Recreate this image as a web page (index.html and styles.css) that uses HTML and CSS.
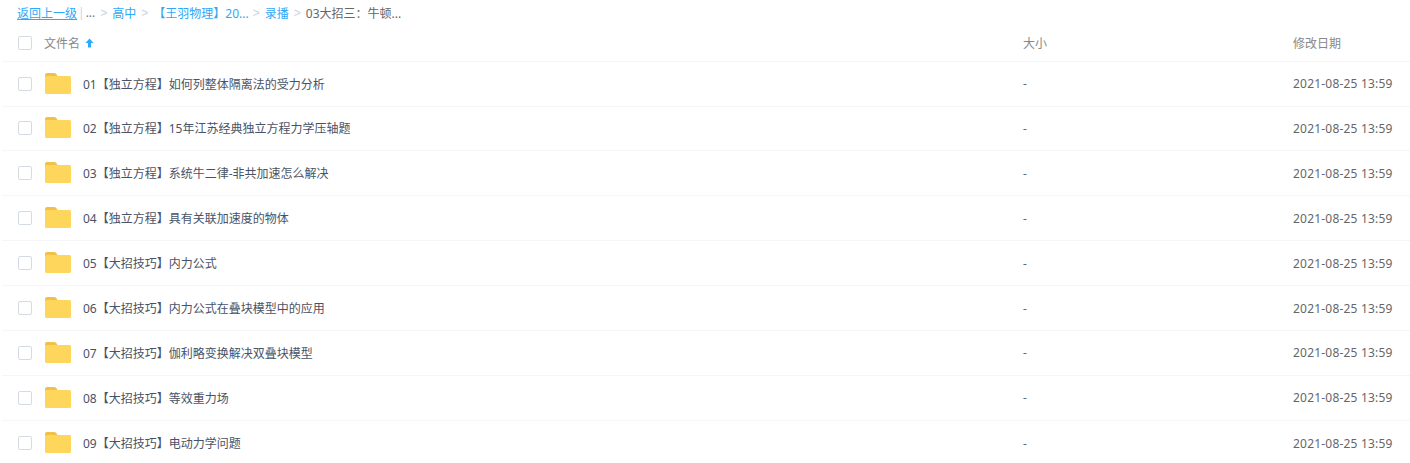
FILE: index.html

```html
<!DOCTYPE html>
<html lang="en">
<head>
    <meta charset="UTF-8">
    <title>文件列表</title>
    <link rel="stylesheet" href="styles.css">
</head>
<body>
    <div class="crumbs">
        <a class="back" href="#">返回上一级</a>
        <span class="bar">|</span>
        <span class="dots">...</span>
        <span class="sep">&gt;</span>
        <a href="#">高中</a>
        <span class="sep">&gt;</span>
        <a class="bracket" href="#">【王羽物理】20...</a>
        <span class="sep">&gt;</span>
        <a href="#">录播</a>
        <span class="sep">&gt;</span>
        <span class="current">03大招三：牛顿...</span>
    </div>

    <div class="row head">
        <span class="check"></span>
        <div class="name-cell head-name">文件名
            <svg class="sort" width="9" height="10" viewBox="0 0 9 10"><path d="M4.5 0.5 L8.5 5 H6 V9.5 H3 V5 H0.5 Z" fill="#2ea8f7"/></svg>
        </div>
        <div class="size">大小</div>
        <div class="date">修改日期</div>
    </div>

    <div class="row">
        <span class="check"></span>
        <div class="name-cell"><svg class="folder"><use href="#folder"/></svg><span class="fname">01【独立方程】如何列整体隔离法的受力分析</span></div>
        <div class="size">-</div>
        <div class="date">2021-08-25 13:59</div>
    </div>
    <div class="row">
        <span class="check"></span>
        <div class="name-cell"><svg class="folder"><use href="#folder"/></svg><span class="fname">02【独立方程】15年江苏经典独立方程力学压轴题</span></div>
        <div class="size">-</div>
        <div class="date">2021-08-25 13:59</div>
    </div>
    <div class="row">
        <span class="check"></span>
        <div class="name-cell"><svg class="folder"><use href="#folder"/></svg><span class="fname">03【独立方程】系统牛二律-非共加速怎么解决</span></div>
        <div class="size">-</div>
        <div class="date">2021-08-25 13:59</div>
    </div>
    <div class="row">
        <span class="check"></span>
        <div class="name-cell"><svg class="folder"><use href="#folder"/></svg><span class="fname">04【独立方程】具有关联加速度的物体</span></div>
        <div class="size">-</div>
        <div class="date">2021-08-25 13:59</div>
    </div>
    <div class="row">
        <span class="check"></span>
        <div class="name-cell"><svg class="folder"><use href="#folder"/></svg><span class="fname">05【大招技巧】内力公式</span></div>
        <div class="size">-</div>
        <div class="date">2021-08-25 13:59</div>
    </div>
    <div class="row">
        <span class="check"></span>
        <div class="name-cell"><svg class="folder"><use href="#folder"/></svg><span class="fname">06【大招技巧】内力公式在叠块模型中的应用</span></div>
        <div class="size">-</div>
        <div class="date">2021-08-25 13:59</div>
    </div>
    <div class="row">
        <span class="check"></span>
        <div class="name-cell"><svg class="folder"><use href="#folder"/></svg><span class="fname">07【大招技巧】伽利略变换解决双叠块模型</span></div>
        <div class="size">-</div>
        <div class="date">2021-08-25 13:59</div>
    </div>
    <div class="row">
        <span class="check"></span>
        <div class="name-cell"><svg class="folder"><use href="#folder"/></svg><span class="fname">08【大招技巧】等效重力场</span></div>
        <div class="size">-</div>
        <div class="date">2021-08-25 13:59</div>
    </div>
    <div class="row last">
        <span class="check"></span>
        <div class="name-cell"><svg class="folder"><use href="#folder"/></svg><span class="fname">09【大招技巧】电动力学问题</span></div>
        <div class="size">-</div>
        <div class="date">2021-08-25 13:59</div>
    </div>

    <svg class="defs" width="0" height="0">
        <symbol id="folder" viewBox="0 0 26 22">
            <path d="M0 2 Q0 0 2 0 H9 Q11 0 12 2 L13 4 H0 Z" fill="#f2bf47"/>
            <rect x="0" y="3" width="26" height="18" rx="1.5" fill="#ffd65c"/>
        </symbol>
    </svg>
</body>
</html>
```

FILE: styles.css

```css
* {
    margin: 0;
    padding: 0;
    box-sizing: border-box;
}

body {
    font-family: "Noto Sans", "Noto Sans CJK SC", sans-serif;
    font-size: 12px;
    color: #666;
    background: #fff;
    overflow: hidden;
}

a {
    color: #2ea8f7;
    text-decoration: none;
}

.crumbs {
    height: 25px;
    padding-left: 17px;
    display: flex;
    align-items: center;
    white-space: pre;
}

.crumbs .back {
    text-decoration: underline;
}

.bar {
    color: #c8d4e0;
    margin: 0 1px;
}

.dots {
    color: #777;
}

.sep {
    color: #c8d4e0;
    margin: 0 5px;
    font-family: "Liberation Sans", sans-serif;
}

.bracket {
    margin-right: -1px;
}

.current {
    color: #666;
}

.row {
    height: 44.9px;
    margin-left: 2px;
    border-bottom: 1px solid #f4f6fa;
    display: flex;
    align-items: center;
    color: #4a5265;
}

.head {
    height: 36.65px;
    color: #888;
}

.check {
    width: 14px;
    height: 14px;
    margin-left: 16px;
    border: 1px solid #d5dbe5;
    border-radius: 2px;
    flex-shrink: 0;
}

.name-cell {
    width: 980px;
    margin-left: 11px;
    display: flex;
    align-items: center;
}

.head-name {
    margin-left: 12px;
    width: 979px;
}

.sort {
    margin-left: 5px;
}

.folder {
    width: 26px;
    height: 22px;
    margin-left: 2px;
    margin-right: 12px;
    flex-shrink: 0;
}

.size {
    width: 270px;
    flex-shrink: 0;
    color: #666;
}

.head .size {
    color: #888;
}

.date {
    white-space: nowrap;
    letter-spacing: 0.2px;
    color: #666;
}

.head .date {
    letter-spacing: 0;
    color: #888;
}

.last {
    border-bottom: none;
}

.defs {
    position: absolute;
}
```
